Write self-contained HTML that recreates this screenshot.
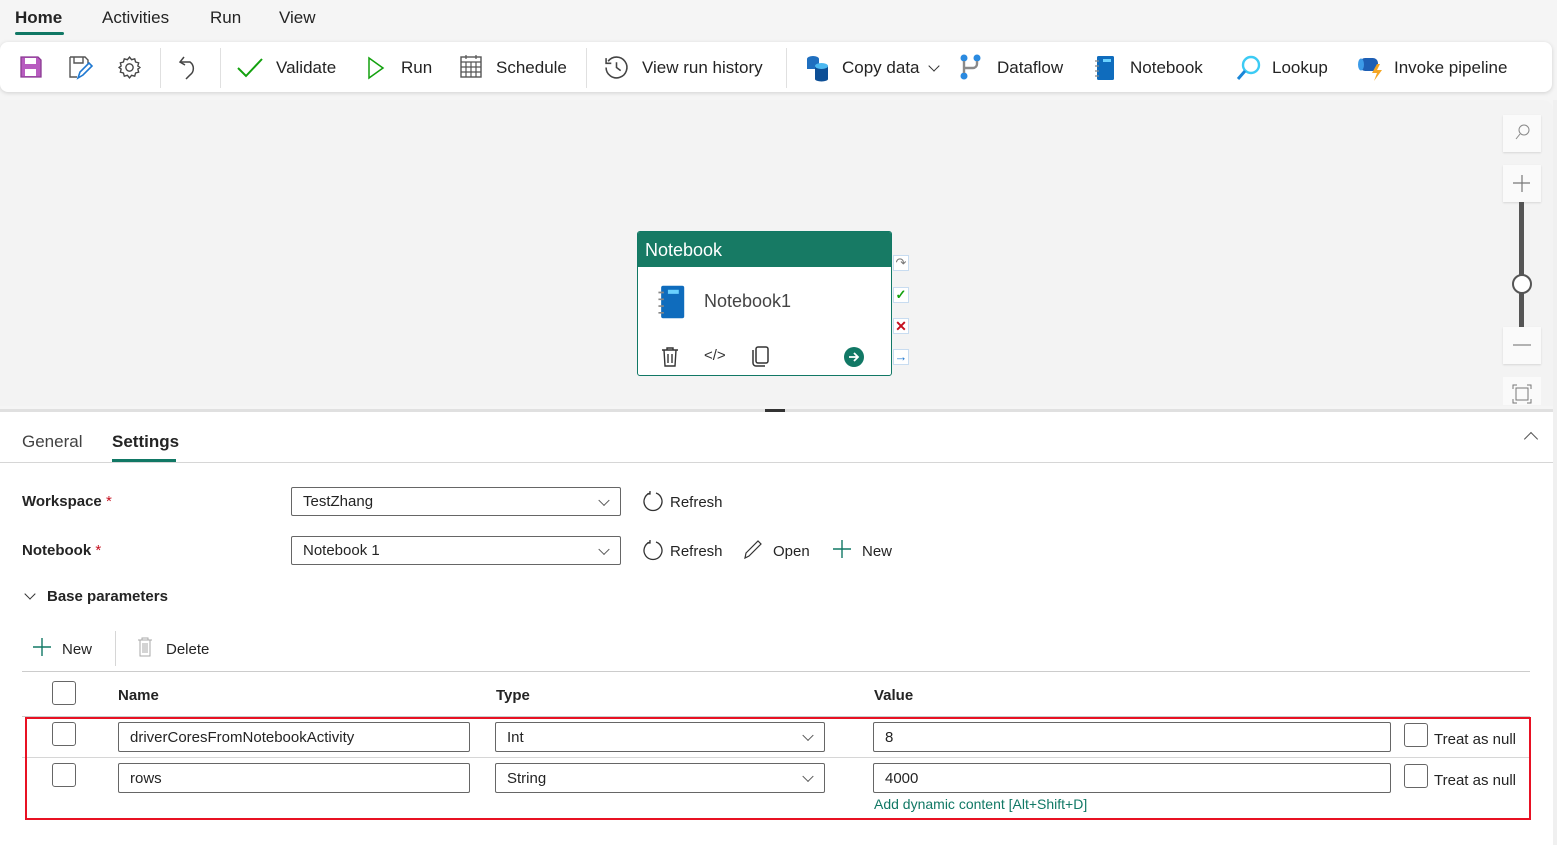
<!DOCTYPE html>
<html><head><meta charset="utf-8"><style>
*{box-sizing:border-box;margin:0;padding:0}
body{width:1557px;height:845px;overflow:hidden;background:#f5f5f5;font-family:"Liberation Sans",sans-serif;color:#242424;position:relative}
.a{position:absolute}
.t{font-size:17px;white-space:nowrap}
.tb{position:absolute;left:0;top:42px;width:1552px;height:50px;background:#fff;border-radius:8px;box-shadow:0 1px 4px rgba(0,0,0,.15)}
.sep{position:absolute;top:6px;width:1px;height:40px;background:#e0e0e0}
.lbl{font-size:15px;font-weight:bold;color:#242424}
.inp{position:absolute;border:1px solid #666;border-radius:2px;background:#fff;font-size:15px;padding-left:11px;display:flex;align-items:center}
.chev{position:absolute;right:12px;top:50%;width:8px;height:8px;border-right:1.2px solid #555;border-bottom:1.2px solid #555;transform:translateY(-70%) rotate(45deg)}
.cb{position:absolute;width:24px;height:24px;border:1px solid #666;border-radius:3px;background:#fff}
.hz{position:absolute;height:1px;background:#d6d6d6}
</style></head><body>
<!-- top tabs -->
<div class="a t" style="left:15px;top:8px;font-weight:bold">Home</div>
<div class="a" style="left:15px;top:32px;width:49px;height:3px;background:#117865;border-radius:2px"></div>
<div class="a t" style="left:102px;top:8px">Activities</div>
<div class="a t" style="left:210px;top:8px">Run</div>
<div class="a t" style="left:279px;top:8px">View</div>

<div class="tb">
 <svg class="a" style="left:19px;top:13px" width="24" height="24" viewBox="0 0 24 24"><path d="M2 2h17l3 3v17H2z" fill="#b85cc0" stroke="#8a3a92" stroke-width="1.3"/><rect x="6" y="3" width="11" height="6" fill="#fff"/><rect x="6" y="14" width="11" height="7" fill="#fff"/></svg>
 <svg class="a" style="left:68px;top:13px" width="26" height="26" viewBox="0 0 26 26"><path d="M2 2h15l3 3v5M9 22H2V2" fill="none" stroke="#555" stroke-width="1.4"/><path d="M6 2v6h9V2" fill="none" stroke="#555" stroke-width="1.4"/><path d="M10 23l2-6 9-9 3 3-9 9z" fill="#fff" stroke="#1f78d1" stroke-width="1.6"/></svg>
 <svg class="a" style="left:117px;top:13px" width="25" height="25" viewBox="0 0 24 24"><path d="M12 2l2 2.5 3-.8.8 3 3 .8-.8 3L22 12l-2 1.5.8 3-3 .8-.8 3-3-.8L12 22l-2-2.5-3 .8-.8-3-3-.8.8-3L2 12l2-1.5-.8-3 3-.8.8-3 3 .8z" fill="none" stroke="#444" stroke-width="1.3"/><circle cx="12" cy="12" r="3.5" fill="none" stroke="#444" stroke-width="1.3"/></svg>
 <div class="sep" style="left:160px"></div>
 <svg class="a" style="left:178px;top:12px" width="24" height="26" viewBox="0 0 24 26"><path d="M6 3L2 8l5 3" fill="none" stroke="#444" stroke-width="1.5"/><path d="M2 8h10a8 8 0 0 1 0 13l-4 4" fill="none" stroke="#444" stroke-width="1.5"/></svg>
 <div class="sep" style="left:220px"></div>
 <svg class="a" style="left:236px;top:14px" width="28" height="24" viewBox="0 0 28 24"><path d="M2 12l8 8L26 3" fill="none" stroke="#13a10e" stroke-width="2"/></svg>
 <div class="a t" style="left:276px;top:16px">Validate</div>
 <svg class="a" style="left:366px;top:14px" width="20" height="24" viewBox="0 0 20 24"><path d="M3 2l14 10L3 22z" fill="none" stroke="#13a10e" stroke-width="1.5"/></svg>
 <div class="a t" style="left:401px;top:16px">Run</div>
 <svg class="a" style="left:459px;top:13px" width="24" height="24" viewBox="0 0 24 24"><rect x="2" y="2" width="20" height="20" fill="none" stroke="#555" stroke-width="1.4"/><path d="M2 7h20M2 12h20M2 17h20M7 7v15M12 7v15M17 7v15M7 0v4M17 0v4" stroke="#555" stroke-width="1.2"/></svg>
 <div class="a t" style="left:496px;top:16px">Schedule</div>
 <div class="sep" style="left:586px"></div>
 <svg class="a" style="left:604px;top:13px" width="25" height="25" viewBox="0 0 24 24"><path d="M4 6A10 10 0 1 1 2 12" fill="none" stroke="#444" stroke-width="1.5"/><path d="M2 3v5h5" fill="none" stroke="#444" stroke-width="1.5"/><path d="M12 7v5l4 3" fill="none" stroke="#444" stroke-width="1.5"/></svg>
 <div class="a t" style="left:642px;top:16px">View run history</div>
 <div class="sep" style="left:786px"></div>
 <svg class="a" style="left:805px;top:12px" width="26" height="28" viewBox="0 0 26 28"><ellipse cx="8" cy="5" rx="6" ry="3" fill="#1f6fbf"/><rect x="2" y="5" width="12" height="10" fill="#1f6fbf"/><rect x="10" y="12" width="13" height="13" fill="#0d4f96"/><ellipse cx="16.5" cy="12" rx="6.5" ry="3" fill="#4cb8f0"/><ellipse cx="16.5" cy="25" rx="6.5" ry="2.5" fill="#0d4f96"/></svg>
 <div class="a t" style="left:842px;top:16px">Copy data</div>
 <div class="a" style="left:930px;top:20px;width:8px;height:8px;border-right:1.5px solid #333;border-bottom:1.5px solid #333;transform:rotate(45deg)"></div>
 <svg class="a" style="left:959px;top:11px" width="24" height="28" viewBox="0 0 24 28"><circle cx="5" cy="5" r="3.5" fill="#2a8ae0"/><circle cx="18" cy="5" r="3.5" fill="#2a8ae0"/><circle cx="5" cy="23" r="3.5" fill="#2a8ae0"/><path d="M5 8v12M18 8v3a4 4 0 0 1-4 4H5" fill="none" stroke="#8a8a8a" stroke-width="2.4"/></svg>
 <div class="a t" style="left:997px;top:16px">Dataflow</div>
 <svg class="a" style="left:1094px;top:12px" width="22" height="28" viewBox="0 0 22 28"><rect x="3" y="2" width="17" height="24" rx="1.5" fill="#0f6cbd"/><rect x="9" y="5" width="8" height="3" fill="#6ad1ff"/><path d="M1 7h4M1 12h4M1 17h4M1 22h4" stroke="#888" stroke-width="1.2"/></svg>
 <div class="a t" style="left:1130px;top:16px">Notebook</div>
 <svg class="a" style="left:1236px;top:12px" width="26" height="28" viewBox="0 0 26 28"><circle cx="15" cy="11" r="8" fill="none" stroke="#3ccbf4" stroke-width="2.4"/><path d="M9 17L2 25" stroke="#1a86d8" stroke-width="3"/></svg>
 <div class="a t" style="left:1272px;top:16px">Lookup</div>
 <svg class="a" style="left:1357px;top:12px" width="28" height="28" viewBox="0 0 28 28"><rect x="3" y="4" width="18" height="13" rx="5" fill="#1e5fb4"/><ellipse cx="4" cy="10.5" rx="3" ry="6" fill="#3c9be8"/><path d="M20 10l-5 9h5l-3 8 8-11h-5l3-6z" fill="#f5a623"/></svg>
 <div class="a t" style="left:1394px;top:16px">Invoke pipeline</div>
</div>

<!-- canvas -->
<div class="a" style="left:0;top:100px;width:1553px;height:306px;background:#f3f3f3;border-radius:0 10px 0 0"></div>
<div class="a" style="left:637px;top:231px;width:255px;height:145px;background:#fff;border:1.5px solid #117865;border-radius:3px;overflow:hidden">
 <div style="height:35px;background:#177a64;color:#fff;font-size:18px;padding:8px 0 0 7px">Notebook</div>
 <svg class="a" style="left:15px;top:51px" width="38" height="38" viewBox="0 0 22 28"><rect x="3" y="2" width="17" height="24" rx="1.5" fill="#0f6cbd"/><rect x="8" y="5" width="8" height="3" fill="#6ad1ff"/><path d="M1 7h4M1 12h4M1 17h4M1 22h4" stroke="#888" stroke-width="1.2"/></svg>
 <div class="a" style="left:66px;top:59px;font-size:18px;color:#444">Notebook1</div>
 <svg class="a" style="left:21px;top:114px" width="22" height="22" viewBox="0 0 22 22"><path d="M3 4h16M8 4V2h6v2M5 4l1 16h10l1-16M9 8v9M13 8v9" fill="none" stroke="#333" stroke-width="1.4"/></svg>
 <div class="a" style="left:66px;top:115px;font-size:15px;color:#333">&lt;/&gt;</div>
 <svg class="a" style="left:112px;top:113px" width="20" height="22" viewBox="0 0 20 22"><rect x="6" y="2" width="12" height="16" rx="2" fill="none" stroke="#333" stroke-width="1.5"/><path d="M3 5v13a3 3 0 0 0 3 3h9" fill="none" stroke="#333" stroke-width="1.5"/></svg>
 <svg class="a" style="left:205px;top:114px" width="22" height="22" viewBox="0 0 22 22"><circle cx="11" cy="11" r="10" fill="#117865"/><path d="M6 11h9M11 7l4 4-4 4" fill="none" stroke="#fff" stroke-width="1.8"/></svg>
</div>
<div class="a" style="left:893px;top:255px;width:16px;height:16px;background:#fff;border:1px solid #c8dcf0;color:#777;font-size:13px;line-height:14px;text-align:center">↷</div>
<div class="a" style="left:893px;top:287px;width:16px;height:16px;background:#fff;border:1px solid #c8dcf0;color:#13a10e;font-size:13px;line-height:14px;text-align:center;font-weight:bold">✓</div>
<div class="a" style="left:893px;top:318px;width:16px;height:16px;background:#fff;border:1px solid #c8dcf0;color:#c50f1f;font-size:14px;line-height:14px;text-align:center;font-weight:bold">✕</div>
<div class="a" style="left:893px;top:349px;width:16px;height:16px;background:#fff;border:1px solid #c8dcf0;color:#1f78d1;font-size:13px;line-height:14px;text-align:center;font-weight:bold">→</div>

<!-- zoom controls -->
<div class="a" style="left:1503px;top:115px;width:38px;height:37px;background:#fafafa;box-shadow:0 1px 2px rgba(0,0,0,.12)"><svg width="38" height="37"><circle cx="21" cy="15" r="5" fill="none" stroke="#888" stroke-width="1"/><path d="M17 19l-4 5" stroke="#888"/></svg></div>
<div class="a" style="left:1503px;top:165px;width:38px;height:37px;background:#fafafa;box-shadow:0 1px 2px rgba(0,0,0,.12)"><svg width="38" height="37"><path d="M19 10v17M10 18h17" stroke="#777" stroke-width="1.2"/></svg></div>
<div class="a" style="left:1519px;top:202px;width:5px;height:125px;background:#555"></div>
<div class="a" style="left:1512px;top:274px;width:20px;height:20px;border-radius:50%;background:#fff;border:2px solid #555"></div>
<div class="a" style="left:1503px;top:327px;width:38px;height:37px;background:#fafafa;box-shadow:0 1px 2px rgba(0,0,0,.12)"><svg width="38" height="37"><path d="M10 18h18" stroke="#888" stroke-width="1.2"/></svg></div>
<div class="a" style="left:1503px;top:377px;width:38px;height:28px;background:#fafafa;overflow:hidden"><svg width="38" height="37"><rect x="13" y="11" width="12" height="12" fill="none" stroke="#777"/><path d="M10 12V8h4M24 8h4v4M28 22v4h-4M14 26h-4v-4" fill="none" stroke="#777"/></svg></div>

<!-- bottom panel -->
<div class="a" style="left:0;top:409px;width:1553px;height:436px;background:#fff"></div>
<div class="a" style="left:0;top:409px;width:1553px;height:3px;background:#e0e0e0"></div>
<div class="a" style="left:765px;top:409px;width:20px;height:3px;background:#333"></div>
<div class="a t" style="left:22px;top:432px;color:#424242">General</div>
<div class="a t" style="left:112px;top:432px;font-weight:bold">Settings</div>
<div class="a" style="left:112px;top:459px;width:64px;height:3px;background:#117865"></div>
<div class="hz" style="left:0;top:462px;width:1553px"></div>
<div class="a" style="left:1526px;top:434px;width:10px;height:10px;border-left:1.2px solid #555;border-top:1.2px solid #555;transform:rotate(45deg)"></div>

<div class="a lbl" style="left:22px;top:493px">Workspace <span style="color:#c50f1f;font-weight:normal">*</span></div>
<div class="inp" style="left:291px;top:487px;width:330px;height:29px">TestZhang<span class="chev"></span></div>
<svg class="a" style="left:642px;top:490px" width="22" height="22" viewBox="0 0 22 22"><path d="M8 3A9 9 0 1 0 14 3" fill="none" stroke="#333" stroke-width="1.3"/><path d="M8 1v3H5" fill="none" stroke="#333" stroke-width="1.3"/></svg>
<div class="a" style="left:670px;top:494px;font-size:15px">Refresh</div>

<div class="a lbl" style="left:22px;top:542px">Notebook <span style="color:#c50f1f;font-weight:normal">*</span></div>
<div class="inp" style="left:291px;top:536px;width:330px;height:29px">Notebook 1<span class="chev"></span></div>
<svg class="a" style="left:642px;top:539px" width="22" height="22" viewBox="0 0 22 22"><path d="M8 3A9 9 0 1 0 14 3" fill="none" stroke="#333" stroke-width="1.3"/><path d="M8 1v3H5" fill="none" stroke="#333" stroke-width="1.3"/></svg>
<div class="a" style="left:670px;top:543px;font-size:15px">Refresh</div>
<svg class="a" style="left:742px;top:538px" width="22" height="22" viewBox="0 0 22 22"><path d="M3 20l1-5L16 3l3 3L7 18z" fill="none" stroke="#333" stroke-width="1.2"/></svg>
<div class="a" style="left:773px;top:543px;font-size:15px">Open</div>
<svg class="a" style="left:832px;top:539px" width="20" height="20"><path d="M10 1v18M1 10h18" stroke="#117865" stroke-width="1.4"/></svg>
<div class="a" style="left:862px;top:543px;font-size:15px">New</div>

<div class="a" style="left:26px;top:590px;width:8px;height:8px;border-right:1.3px solid #333;border-bottom:1.3px solid #333;transform:rotate(45deg)"></div>
<div class="a lbl" style="left:47px;top:588px">Base parameters</div>

<svg class="a" style="left:32px;top:637px" width="20" height="20"><path d="M10 1v18M1 10h18" stroke="#117865" stroke-width="1.4"/></svg>
<div class="a" style="left:62px;top:641px;font-size:15px">New</div>
<div class="a" style="left:115px;top:631px;width:1px;height:35px;background:#d6d6d6"></div>
<svg class="a" style="left:136px;top:637px" width="18" height="20" viewBox="0 0 18 20"><path d="M2 3h14M6 3V1h6v2M4 3v16h10V3M7 6v10M9 6v10M11 6v10" fill="none" stroke="#aaa" stroke-width="1"/></svg>
<div class="a" style="left:166px;top:641px;font-size:15px">Delete</div>
<div class="hz" style="left:22px;top:671px;width:1508px;height:1px;background:#ccc"></div>

<div class="cb" style="left:52px;top:681px"></div>
<div class="a lbl" style="left:118px;top:687px">Name</div>
<div class="a lbl" style="left:496px;top:687px">Type</div>
<div class="a lbl" style="left:874px;top:687px">Value</div>
<div class="hz" style="left:22px;top:716px;width:1508px;height:1px;background:#ccc"></div>

<div class="cb" style="left:52px;top:722px"></div>
<div class="inp" style="left:118px;top:722px;width:352px;height:30px">driverCoresFromNotebookActivity</div>
<div class="inp" style="left:495px;top:722px;width:330px;height:30px">Int<span class="chev"></span></div>
<div class="inp" style="left:873px;top:722px;width:518px;height:30px">8</div>
<div class="cb" style="left:1404px;top:723px"></div>
<div class="a" style="left:1434px;top:731px;font-size:15px;color:#242424">Treat as null</div>
<div class="hz" style="left:22px;top:757px;width:1508px"></div>

<div class="cb" style="left:52px;top:763px"></div>
<div class="inp" style="left:118px;top:763px;width:352px;height:30px">rows</div>
<div class="inp" style="left:495px;top:763px;width:330px;height:30px">String<span class="chev"></span></div>
<div class="inp" style="left:873px;top:763px;width:518px;height:30px">4000</div>
<div class="cb" style="left:1404px;top:764px"></div>
<div class="a" style="left:1434px;top:772px;font-size:15px">Treat as null</div>
<div class="a" style="left:874px;top:796px;font-size:14px;color:#117865">Add dynamic content [Alt+Shift+D]</div>

<div class="a" style="left:25px;top:717px;width:1506px;height:103px;border:2px solid #e81123"></div>
<div class="a" style="left:1553px;top:100px;width:4px;height:745px;background:#f0f0f0"></div>
</body></html>
